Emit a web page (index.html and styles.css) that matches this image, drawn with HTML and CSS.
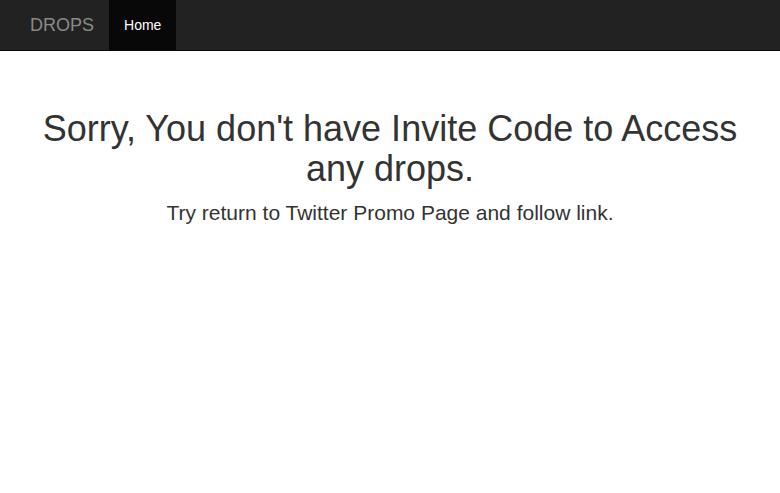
FILE: index.html
```html
<!DOCTYPE html>
<html>
<head>
<meta charset="utf-8">
<link rel="stylesheet" href="styles.css">
</head>
<body>
<nav class="navbar">
  <div class="nav-container">
    <a class="brand" href="#">DROPS</a>
    <ul class="nav">
      <li class="active"><a href="#">Home</a></li>
    </ul>
  </div>
</nav>
<main class="content">
  <h1 class="title">Sorry, You don't have Invite Code to Access any drops.</h1>
  <p class="lead">Try return to Twitter Promo Page and follow link.</p>
</main>
</body>
</html>
```
FILE: styles.css
```css
* { box-sizing: border-box; }
html, body { margin: 0; padding: 0; }
body {
  font-family: "Liberation Sans", Arial, sans-serif;
  font-size: 14px;
  line-height: 1.42857;
  color: #333;
  background: #fff;
}
.navbar {
  background: #222;
  border-bottom: 1px solid #080808;
  height: 51px;
}
.nav-container {
  display: flex;
  padding: 0 15px;
  height: 50px;
}
.brand {
  padding: 15px;
  font-size: 18px;
  line-height: 20px;
  color: #8a8a8a;
  text-decoration: none;
}
.nav {
  list-style: none;
  margin: 0;
  padding: 0;
  display: flex;
}
.nav a {
  display: block;
  padding: 15px;
  line-height: 20px;
  color: #9d9d9d;
  text-decoration: none;
}
.nav .active a {
  background: #080808;
  color: #fff;
}
.content {
  padding: 58px 15px 0;
  text-align: center;
}
.title {
  margin: 0 0 10px;
  font-size: 36px;
  font-weight: 500;
  line-height: 1.1;
}
.lead {
  margin: 0;
  font-size: 21px;
  line-height: 1.4;
  font-weight: 300;
}
```
